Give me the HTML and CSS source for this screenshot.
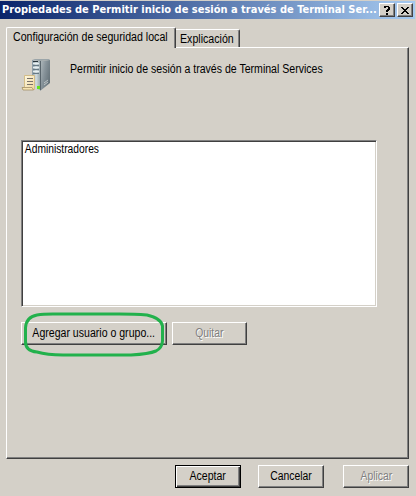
FILE: index.html
```html
<!DOCTYPE html>
<html lang="es">
<head>
<meta charset="utf-8">
<title>Propiedades</title>
<link rel="stylesheet" href="styles.css">
</head>
<body>
<div class="dialog">
  <header class="titlebar">
    <span class="title">Propiedades de Permitir inicio de sesión a través de Terminal Ser...</span>
    <button class="caption-btn help" aria-label="Ayuda"><svg width="8" height="9" viewBox="0 0 8 9" shape-rendering="crispEdges"><path d="M1 0h5v1h1v3h-1v1h-1v1h-2v-2h1v-1h1v-2h-2v1h-2zM3 7h2v2h-2z"/></svg></button>
    <button class="caption-btn" aria-label="Cerrar"><svg width="8" height="7" viewBox="0 0 8 7" shape-rendering="crispEdges"><path d="M0 0h2v1h1v1h2v-1h1v-1h2v1h-1v1h-1v1h-1v1h1v1h1v1h1v1h-2v-1h-1v-1h-2v1h-1v1h-2v-1h1v-1h1v-1h1v-1h-1v-1h-1v-1h-1z"/></svg></button>
  </header>
  <nav class="tabs">
    <div class="tab active"><span class="t-config">Configuración de seguridad local</span></div>
    <div class="tab"><span class="t-exp">Explicación</span></div>
  </nav>
  <main class="panel">
    <div class="policy">
      <svg class="server" width="32" height="32" viewBox="0 0 32 32">
        <defs>
          <linearGradient id="side" x1="0" y1="0" x2="1" y2="0.6"><stop offset="0" stop-color="#b4bdc0"/><stop offset=".5" stop-color="#87939a"/><stop offset="1" stop-color="#66737a"/></linearGradient>
          <linearGradient id="front" x1="0" y1="0" x2="1" y2="0"><stop offset="0" stop-color="#8395a0"/><stop offset=".5" stop-color="#d3dde0"/><stop offset="1" stop-color="#9aa9af"/></linearGradient>
          <linearGradient id="paper" x1="0" y1="0" x2="1" y2="1"><stop offset="0" stop-color="#fffbe9"/><stop offset="1" stop-color="#f0d69a"/></linearGradient>
        </defs>
        <path d="M11 1L19 2V31L11 29Z" fill="url(#front)"/>
        <path d="M19 2L29 1V24L19 32Z" fill="url(#side)"/>
        <path d="M11 1L14 0H28L29 1L19 2Z" fill="#9ba5a9"/>
        <path d="M12 2.500h5" stroke="#26333b"/>
        <path d="M12 6.500h6M12 10.500h6M12 14.500h6" stroke="#667a86"/>
        <path d="M12 4.500h6M12 8.500h6M12 12.500h6" stroke="#e6eff2"/>
        <path d="M19.500 2V31" stroke="#59656c"/>
        <path d="M23 24l4-3M23 26l4-3" stroke="#dce1e1" stroke-width=".7"/>
        <path d="M3.500 16.500H13.500V30.500H3L1.500 28.500H3.500Z" fill="url(#paper)" stroke="#d3bd87"/>
        <path d="M1 28.500H11L12.500 31H2Z" fill="#f7e4b2" stroke="#a28f67" stroke-width=".8"/>
        <path d="M6 19.500h6M6 22.500h6M6 25.500h6" stroke="#77716b"/>
        <path d="M16 27h3v3h-3z" fill="#63e51b"/>
      </svg>
      <span class="t-policy">Permitir inicio de sesión a través de Terminal Services</span>
    </div>
    <div class="list"><div class="t-admin">Administradores</div></div>
    <div class="list-actions">
      <button class="btn add"><span class="t-add">Agregar usuario o grupo...</span>
        <svg class="mark" width="142" height="46" viewBox="0 0 142 46"><path d="M14 3Q3 5 2.500 16V29Q2 39 14 40Q24 43 40 43H108Q126 42 133 39Q139 36 139.500 29V14Q138 6 124 3Q112 2 96 2H30Q20 2 14 3Z" fill="none" stroke="#22b14c" stroke-width="3"/></svg>
      </button>
      <button class="btn quit" disabled><span class="t-quit">Quitar</span></button>
    </div>
  </main>
  <footer class="actions">
    <button class="btn default"><span class="t-ok">Aceptar</span></button>
    <button class="btn cancel"><span class="t-cancel">Cancelar</span></button>
    <button class="btn apply" disabled><span class="t-apply">Aplicar</span></button>
  </footer>
</div>
</body>
</html>
```
FILE: styles.css
```css
* { box-sizing: border-box; }
body { margin: 0; background: #d4d0c8; font: 12px/14px "Liberation Sans", sans-serif; color: #000; overflow: hidden; }
button { font: inherit; color: inherit; padding: 0; margin: 0; border-radius: 0; }
span, .list div { display: block; white-space: nowrap; }
.dialog { width: 416px; height: 496px; padding-top: 1px; background: #d4d0c8; }
.titlebar { display: flex; align-items: center; height: 18px; margin-right: 1px; padding: 0 2px 0 2px; background: linear-gradient(90deg, #0a246a, #a6caf0); }
.title { flex: 1; color: #fff; font: bold 11px/16px "DejaVu Sans Condensed", "DejaVu Sans", sans-serif; }
.caption-btn { display: flex; align-items: center; justify-content: center; flex: none; width: 16px; height: 14px; background: #d4d0c8; border: 1px solid; border-color: #fff #404040 #404040 #fff; box-shadow: inset -1px -1px #808080; }
.help { margin-right: 2px; }
.tabs { display: flex; align-items: flex-end; height: 28px; margin-left: 6px; }
.tab { width: 64px; height: 18px; padding: 2px 0 0 4px; border: 1px solid #fff; border-width: 1px 1px 0 0; border-right-color: #404040; border-radius: 0 2px 0 0; box-shadow: inset -1px 0 #808080; }
.tab.active { position: relative; width: 170px; height: 21px; margin-bottom: -1px; padding: 2px 0 0 6px; border-left-width: 1px; border-radius: 2px 2px 0 0; background: #d4d0c8; }
.panel { width: 403px; height: 412px; margin-left: 6px; padding: 11px 0 0 14px; border: 1px solid; border-color: #fff #404040 #404040 #fff; box-shadow: inset -1px -1px #808080; }
.policy { display: flex; gap: 17px; height: 81px; }
.server { flex: none; }
.t-policy { padding-top: 3px; }
.list { width: 356px; height: 167px; padding: 1px 2px; background: #fff; border: 1px solid; border-color: #808080 #fff #fff #808080; box-shadow: inset 1px 1px #404040, inset -1px -1px #d4d0c8; }
.list div { padding: 0 0 0 1px; }
.list-actions { display: flex; gap: 5px; margin-top: 15px; }
.btn { display: flex; align-items: center; justify-content: center; height: 23px; padding-bottom: 2px; background: #d4d0c8; border: 1px solid; border-color: #fff #404040 #404040 #fff; box-shadow: inset -1px -1px #808080; }
.btn:disabled { color: #808080; text-shadow: 1px 1px #fff; }
.add { position: relative; width: 146px; }
.quit { width: 75px; }
.mark { position: absolute; left: 1px; top: -11px; }
.actions { display: flex; justify-content: flex-end; margin: 6px 7px 0 0; }
.actions .btn { width: 66px; }
.actions .default { border-color: #000; box-shadow: inset 1px 1px #fff, inset -1px -1px #404040, inset -2px -2px #808080; }
.cancel { margin: 0 19px 0 17px; }
.t-config, .t-policy, .t-exp, .t-admin { transform-origin: left center; }
.t-config, .t-exp { transform: scaleX(.885); }
.t-policy, .t-add, .t-ok { transform: scaleX(.88); }
.t-admin { transform: scaleX(.855); }
.t-quit, .t-cancel, .t-apply { transform: scaleX(.865); }
```
